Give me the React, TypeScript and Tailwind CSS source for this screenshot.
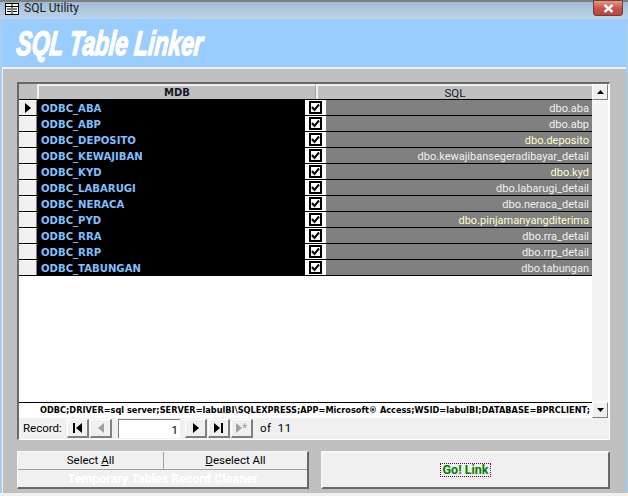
const rows: [string, string, boolean?][] = [
  ["ODBC_ABA", "dbo.aba"],
  ["ODBC_ABP", "dbo.abp"],
  ["ODBC_DEPOSITO", "dbo.deposito", true],
  ["ODBC_KEWAJIBAN", "dbo.kewajibansegeradibayar_detail"],
  ["ODBC_KYD", "dbo.kyd", true],
  ["ODBC_LABARUGI", "dbo.labarugi_detail"],
  ["ODBC_NERACA", "dbo.neraca_detail"],
  ["ODBC_PYD", "dbo.pinjamanyangditerima", true],
  ["ODBC_RRA", "dbo.rra_detail"],
  ["ODBC_RRP", "dbo.rrp_detail"],
  ["ODBC_TABUNGAN", "dbo.tabungan"],
];

const raised = "border border-t-white border-l-white border-r-[#808080] border-b-[#808080]";

function NavBtn({ children }: { children: React.ReactNode }) {
  return (
    <div className={`w-[22px] h-[19px] bg-[#f0f0f0] ${raised} border-b-2 border-r-2 flex items-center justify-center`}>
      {children}
    </div>
  );
}

function Tri({ dir, color = "#000" }: { dir: "l" | "r"; color?: string }) {
  return (
    <svg width="6" height="10" viewBox="0 0 6 10">
      <path d={dir === "r" ? "M0 0L6 5L0 10Z" : "M6 0L0 5L6 10Z"} fill={color} />
    </svg>
  );
}

function Check() {
  return (
    <div className="w-[13px] h-[13px] border-2 border-black bg-white flex items-center justify-center">
      <svg width="9" height="9" viewBox="0 0 9 9">
        <path d="M1 4L3.5 7L8 1.5" stroke="#000" strokeWidth="2" fill="none" />
      </svg>
    </div>
  );
}

export default function App() {
  return (
    <div className="w-[628px] h-[496px] overflow-hidden flex flex-col bg-[#f0f0f0] pb-[3px] font-['Roboto',sans-serif] text-[12px] text-black">
      <div className="h-[19px] shrink-0 border-t-2 border-[#7f7f7f] bg-gradient-to-b from-[#a3bcd6] to-[#bcd3ea] flex items-start pl-[5px] pt-[1px] relative">
        <svg width="14" height="12" viewBox="0 0 14 12" className="mr-[5px]">
          <rect x="0.5" y="0.5" width="13" height="11" fill="#fff" stroke="#000" />
          <path d="M1 3.5H13M7 1V11M2 6H6M8 6H12M2 8.5H6M8 8.5H12" stroke="#000" strokeWidth="1" />
        </svg>
        <span className="text-[12px] leading-[11px] text-[#1a1a1a]">SQL Utility</span>
        <div className="absolute right-[5px] top-[-2px] w-[30px] h-[16px] rounded-b-[3px] border border-[#7a3a34] bg-gradient-to-b from-[#dc9a8e] via-[#c9564a] to-[#b8433a] flex items-center justify-center">
          <svg width="11" height="9" viewBox="0 0 11 9">
            <path d="M1.5 1L9.5 8M9.5 1L1.5 8" stroke="#fff" strokeWidth="2.4" />
          </svg>
        </div>
      </div>

      <div className="flex-1 flex flex-col pl-[2px] pr-[2px] bg-[#a9cdec]">
        <div className="h-[48px] shrink-0 bg-[#99ccff] flex items-center pl-[15px]">
          <span className="text-white italic font-black font-['Liberation_Sans',sans-serif] text-[34px] leading-none [transform:scaleX(0.67)_skewX(-8deg)] origin-left [-webkit-text-stroke:1.5px_white] whitespace-nowrap">
            SQL Table Linker
          </span>
        </div>

        <div className="flex-1 bg-[#c0c0c0] border-t-2 border-t-[#f0f0f0] border-l border-l-[#f0f0f0] pl-[14px] pt-[13px]">
          <div className="w-[593px] h-[358px] border-t-2 border-l-2 border-t-[#696969] border-l-[#696969] border-r border-b border-r-white border-b-white flex flex-col bg-[#c0c0c0]">
            <div className="flex flex-1 min-h-0 bg-white">
              <div className="w-[573px] flex flex-col">
                <div className="h-[16px] shrink-0 flex bg-[#c0c0c0] border-b border-b-black">
                  <div className="w-[18px] bg-[#c0c0c0]" />
                  <div className="w-[279px] border-t-2 border-l-2 border-t-[#f0f0f0] border-l-[#f0f0f0] border-r border-r-[#a0a0a0] text-center font-bold font-['DejaVu_Sans',sans-serif] text-[10px] leading-[14px] text-[#101828]">
                    MDB
                  </div>
                  <div className="flex-1 border-t-2 border-l-2 border-t-[#f0f0f0] border-l-[#f0f0f0] text-center text-[11.5px] leading-[14px] text-[#101828]">
                    SQL
                  </div>
                </div>
                {rows.map(([mdb, sql, yellow], i) => (
                  <div key={mdb} className="h-[16px] shrink-0 flex border-b border-b-black">
                    <div className="w-[18px] bg-[#f0f0f0] border-t border-t-white border-r border-r-[#808080] flex items-center justify-center">
                      {i === 0 && <Tri dir="r" />}
                    </div>
                    <div className="w-[268px] bg-black text-[#80bfff] font-bold font-['DejaVu_Sans',sans-serif] text-[10.1px] leading-[15px] pt-[1px] pl-[4px]">
                      {mdb}
                    </div>
                    <div className="w-[21px] bg-white flex items-center justify-center">
                      <Check />
                    </div>
                    <div className={`flex-1 bg-[#808080] text-right pr-[3px] text-[11px] leading-[15px] pt-[1px] ${yellow ? "text-[#ffffcc]" : "text-[#f0f0f0]"}`}>
                      {sql}
                    </div>
                  </div>
                ))}
              </div>
              <div className="w-[16px] flex flex-col bg-[#f0f0f0]">
                <div className={`h-[16px] bg-[#f0f0f0] ${raised} flex items-center justify-center`}>
                  <svg width="7" height="4" viewBox="0 0 7 4"><path d="M3.5 0L7 4H0Z" fill="#000" /></svg>
                </div>
                <div className="flex-1 bg-[#f4f4f4]" />
              </div>
            </div>
            <div className="h-[16px] shrink-0 flex bg-white">
              <div className="w-[573px] border-t border-t-black bg-white pl-[19px] text-center font-bold font-['DejaVu_Sans',sans-serif] text-[8.2px] leading-[15px] whitespace-nowrap overflow-hidden">
                ODBC;DRIVER=sql server;SERVER=labulBI\SQLEXPRESS;APP=Microsoft® Access;WSID=labulBI;DATABASE=BPRCLIENT;
              </div>
              <div className={`w-[16px] bg-[#f0f0f0] ${raised} flex items-center justify-center`}>
                <svg width="7" height="4" viewBox="0 0 7 4"><path d="M0 0H7L3.5 4Z" fill="#000" /></svg>
              </div>
            </div>
            <div className="h-[21px] shrink-0 bg-[#f0f0f0] flex items-center pl-[4px] text-[11.5px]">
              <span className="w-[44px]">Record:</span>
              <div className="flex gap-[1px]">
                <NavBtn><div className="w-[2px] h-[10px] bg-black mr-[1px]" /><Tri dir="l" /></NavBtn>
                <NavBtn><Tri dir="l" color="#a0a0a0" /></NavBtn>
              </div>
              <div className="w-[62px] h-[19px] ml-[6px] bg-white border-t border-l border-t-[#808080] border-l-[#808080] text-right pr-[2px] leading-[20px]">1</div>
              <div className="flex gap-[1px] ml-[5px]">
                <NavBtn><Tri dir="r" /></NavBtn>
                <NavBtn><Tri dir="r" /><div className="w-[2px] h-[10px] bg-black ml-[1px]" /></NavBtn>
                <NavBtn><Tri dir="r" color="#a0a0a0" /><span className="text-[#a0a0a0] text-[12px] leading-none">*</span></NavBtn>
              </div>
              <span className="ml-[7px] tracking-[0.4px]">of&nbsp; 11</span>
            </div>
          </div>

          <div className="flex mt-[11px] gap-[12px]">
            <div className="w-[292px] h-[38px] flex flex-col border-r-2 border-b-2 border-[#696969] border-t border-l border-t-[#f8f8f8] border-l-[#f8f8f8]">
              <div className="flex h-[19px] border-b border-b-[#a0a0a0] text-[11.5px]">
                <div className="w-[146px] bg-[#f0f0f0] border-r border-r-[#a0a0a0] text-center leading-[17px]">Select <u>A</u>ll</div>
                <div className="flex-1 bg-[#f0f0f0] text-center leading-[17px]"><u>D</u>eselect All</div>
              </div>
              <div className="flex-1 bg-[#f0f0f0] text-center text-white font-bold text-[12.5px] leading-[17px]">
                Temporary Tables Record Cleaner
              </div>
            </div>
            <div className="w-[289px] h-[38px] bg-[#f0f0f0] border-2 border-t-[#f8f8f8] border-l-[#f8f8f8] border-r-[#696969] border-b-[#696969] flex items-center justify-center">
              <span className="border border-dotted border-[#600060] px-[2px] font-bold text-[12.5px] leading-[12px] text-[#008000]">Go! Link</span>
            </div>
          </div>
        </div>
      </div>
    </div>
  );
}
